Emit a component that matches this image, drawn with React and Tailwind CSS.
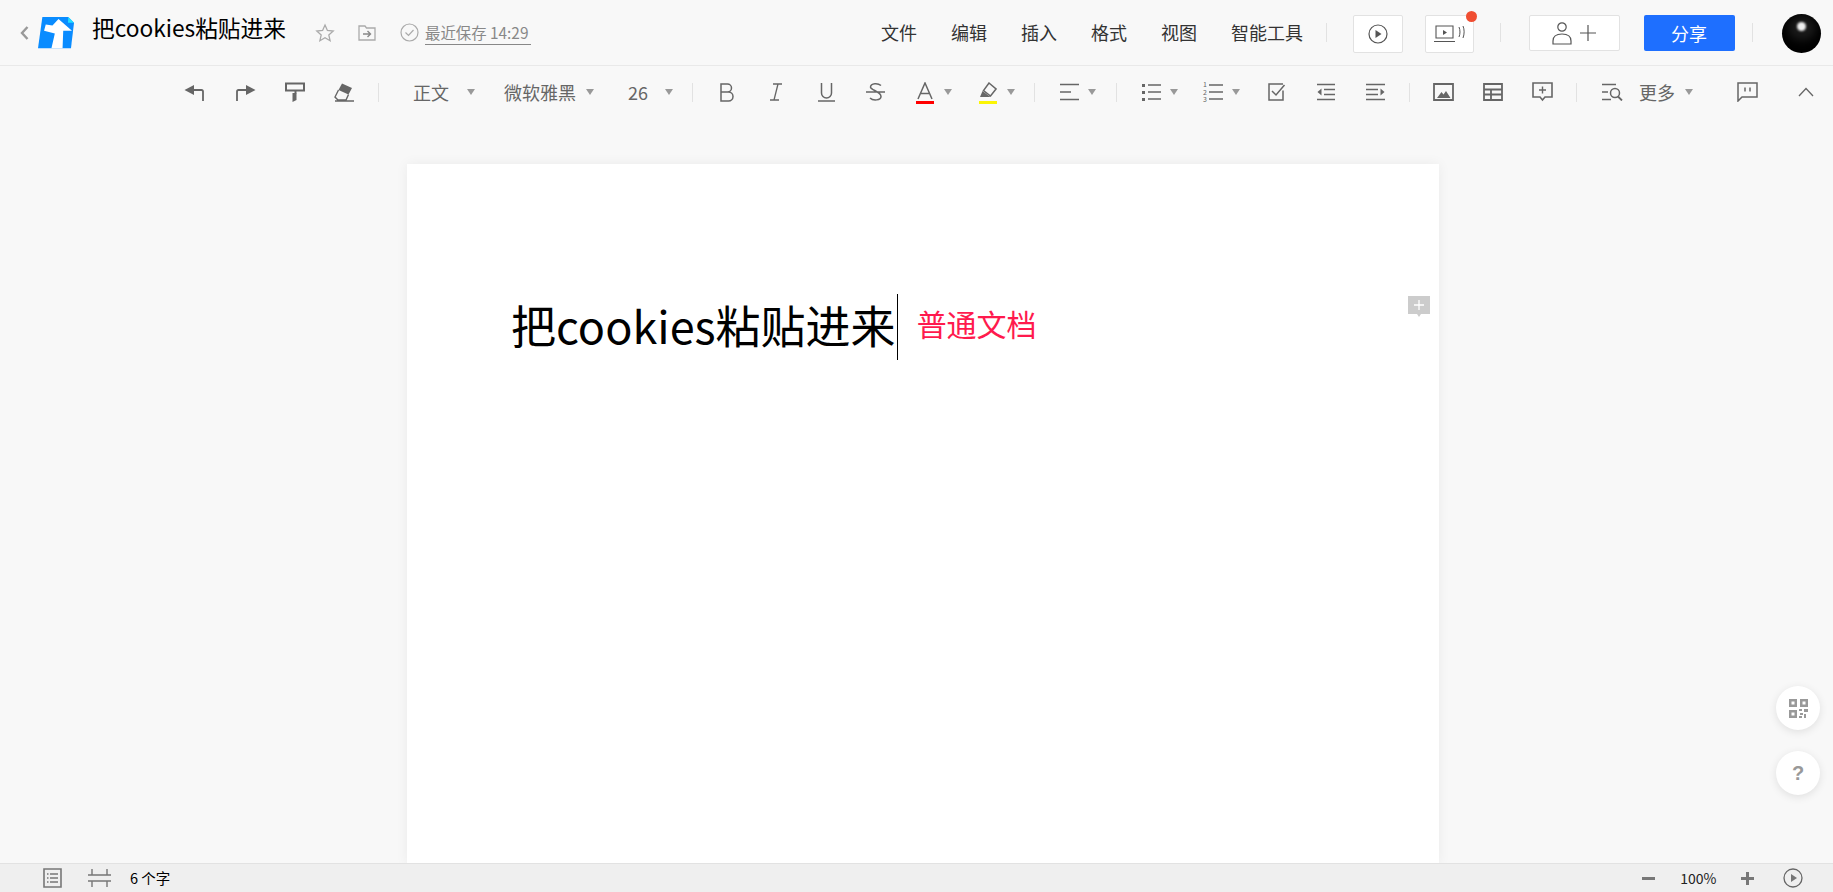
const S = ({ w = 20, h = 20, vb, children, className = "" }) => (
  <svg width={w} height={h} viewBox={vb || `0 0 ${w} ${h}`} fill="none" stroke="#666" strokeWidth="1.5" className={"block shrink-0 " + className}>{children}</svg>
);
const Caret = ({ ml }) => (
  <span className="block w-0 h-0 border-x-[4px] border-x-transparent border-t-[6px] border-t-[#999] shrink-0" style={{ marginLeft: ml }} />
);
const Sep = ({ ml }) => <span className="block w-px h-[19px] bg-[#e2e2e2] shrink-0" style={{ marginLeft: ml }} />;
const Item = ({ ml, children }) => <span className="block shrink-0" style={{ marginLeft: ml }}>{children}</span>;

const Logo = () => (
  <svg width="36" height="32" viewBox="115 35 107 95" className="block">
    <path d="M128 35H205L222 52L213 128H115Z" fill="#0a8cff" />
    <path d="M205 35L222 52H204Z" fill="#21e0ff" />
    <path d="M176 41L216 76H190L188 128H155L165 84L133 76L138 57L158 60Z" fill="#fff" />
  </svg>
);

const Menu = ({ label, ml }) => (
  <span className="block text-[18px] leading-none text-[#333] whitespace-nowrap mb-[2px]" style={{ marginLeft: ml }}>{label}</span>
);
const TT = ({ children, ml }) => (
  <span className="block text-[18px] leading-none text-[#666] whitespace-nowrap" style={{ marginLeft: ml }}>{children}</span>
);

export default function App() {
  return (
    <div className="h-[892px] w-[1833px] overflow-hidden flex flex-col bg-[#f8f8f8] font-['Noto_Sans_CJK_SC','Noto_Sans',sans-serif]">
      {/* header */}
      <header className="h-[66px] shrink-0 border-b border-[#e9e9e9] flex items-center">
        <Item ml="19px">
          <S w={11} h={16}><path d="M8.5 2 3 8l5.5 6" stroke="#999" strokeWidth="2.4" /></S>
        </Item>
        <Item ml="8px"><Logo /></Item>
        <span className="block ml-[18px] w-[195px] text-[22.7px] leading-none text-black whitespace-nowrap mb-[8px]">把cookies粘贴进来</span>
        <Item ml="28px">
          <S w={20} h={20}><path d="M10 2l2.4 5.4 5.8.6-4.4 3.9 1.3 5.8L10 14.8 4.9 17.7l1.3-5.8L1.800 8l5.800-.6z" stroke="#aaa" strokeWidth="1.3" /></S>
        </Item>
        <Item ml="23px">
          <S w={18} h={18}><path d="M1 16V2h6l1.500 2H17v12z" stroke="#aaa" strokeWidth="1.3" /><path d="M5 10h7M9.500 7l3 3-3 3" stroke="#888" strokeWidth="1.4" /></S>
        </Item>
        <Item ml="24px">
          <S w={19} h={19}><circle cx="9.500" cy="9.500" r="8.500" stroke="#aaa" strokeWidth="1.200" /><path d="M5.500 9.500l3 3 5-5.500" stroke="#aaa" strokeWidth="1.200" /></S>
        </Item>
        <span className="block ml-[6px] w-[106px] h-[21px] border-b border-[#888] text-[15.4px] leading-[17px] text-[#888] whitespace-nowrap mt-[4px]">最近保存 14:29</span>

        <Menu label="文件" ml="350px" />
        <Menu label="编辑" ml="34px" />
        <Menu label="插入" ml="34px" />
        <Menu label="格式" ml="34px" />
        <Menu label="视图" ml="34px" />
        <Menu label="智能工具" ml="34px" />
        <Sep ml="22.500px" />
        <span className="block ml-[26px] w-[50px] h-[38px] mt-[3px] bg-white border border-[#e2e2e2] rounded-[2px] flex items-center justify-center">
          <S w={20} h={20}><circle cx="10" cy="10" r="9" stroke="#555" strokeWidth="1.200" /><path d="M7.500 6l6 4-6 4z" fill="#555" stroke="none" /></S>
        </span>
        <span className="block relative ml-[22px] w-[49px] h-[38px] mt-[3px] bg-white border border-[#e2e2e2] rounded-[2px] flex items-center justify-center">
          <S w={32} h={20}><path d="M3 2h17v12H3zM1 17.500h21" stroke="#555" strokeWidth="1.100" /><path d="M10 6l4 2.500-4 2.500z" fill="#555" stroke="none" /><path d="M26 3c1.300 3 1.300 7 0 10M30 2c1.500 3.500 1.500 8 0 12" stroke="#555" strokeWidth="1" /></S>
          <span className="absolute -top-[5px] -right-[4px] w-[11px] h-[11px] rounded-full bg-[#f04e32]" />
        </span>
        <Sep ml="26px" />
        <span className="block ml-[28px] w-[91px] h-[36px] mt-[1px] bg-white border border-[#e2e2e2] rounded-[2px] flex items-center justify-center gap-[7px]">
          <S w={20} h={24}><circle cx="10" cy="6" r="4.200" stroke="#555" strokeWidth="1.200" /><path d="M1 23v-3c0-4 3-7 9-7s9 3 9 7v3z" stroke="#555" strokeWidth="1.200" /></S>
          <S w={18} h={18}><path d="M9 1v16M1 9h16" stroke="#555" strokeWidth="1.200" /></S>
        </span>
        <span className="block ml-[24px] w-[91px] h-[36px] mt-[1px] bg-[#1e6fff] rounded-[2px] text-white text-[18px] leading-[36px] text-center">分享</span>
        <Sep ml="17px" />
        <span className="block relative ml-[29px] mt-[2px] w-[39px] h-[39px] rounded-full bg-black overflow-hidden">
          <span className="absolute left-[15px] top-[8px] w-[9px] h-[9px] rounded-full bg-[#eee] blur-[1px]" />
          <span className="absolute left-[6px] top-[2px] w-[28px] h-[24px] rounded-full bg-white/10 blur-[5px]" />
        </span>
      </header>

      {/* toolbar */}
      <div className="h-[54px] shrink-0 flex items-center pb-[2px]">
        <Item ml="184px"><S w={20} h={20}><path d="M19 19V9.500q0-1.500-1.500-1.500H6" strokeWidth="1.800" /><path d="M10 3 0.500 8l9.500 5z" fill="#666" stroke="none" /></S></Item>
        <Item ml="32px"><S w={20} h={20}><path d="M1 19V9.500q0-1.500 1.500-1.500H14" strokeWidth="1.800" /><path d="M10 3l9.500 5-9.500 5z" fill="#666" stroke="none" /></S></Item>
        <Item ml="29px"><S w={20} h={20}><path d="M1 1.500h18v7H1z" strokeWidth="2" /><path d="M9.500 8.500h2v3h-2z" fill="#666" stroke="none" /><path d="M7.500 11h4v7l-4 2z" fill="#666" stroke="none" /></S></Item>
        <Item ml="29px"><S w={20} h={20}><path d="M8 1.500l10 4.500-3.500 6.500-10-4.500z" fill="#666" stroke="none" /><path d="M4.500 8l-3.500 7 3 3h8l2.500-5.500M1 19h19" strokeWidth="1.400" /></S></Item>
        <Sep ml="24px" />
        <TT ml="34px">正文</TT>
        <Caret ml="18px" />
        <TT ml="29px">微软雅黑</TT>
        <Caret ml="10px" />
        <TT ml="34px">26</TT>
        <Caret ml="17px" />
        <Sep ml="19px" />
        <Item ml="26px"><S w={15} h={20}><path d="M2 2h6.500a4 4 0 0 1 0 8H2zM2 10h7.500a4.500 4.500 0 0 1 0 9H2z" /></S></Item>
        <Item ml="36px"><S w={12} h={20}><path d="M3 2h9M0 18h9M8 2 4 18" strokeWidth="1.300" /></S></Item>
        <Item ml="36px"><S w={17} h={20}><path d="M3.500 1v10a5 5 0 0 0 10 0V1M0 19h17" /></S></Item>
        <Item ml="31px"><S w={19} h={20}><path d="M15 3.500C12 1 5 1 4.500 5c-.3 3 10.500 4.500 10.500 9.500 0 4-8 4.500-11 1.500M0 10h19" /></S></Item>
        <Item ml="31px"><span className="block mt-[2px]"><S w={18} h={22}><path d="M2 17 9 1l7 16M4.500 11.500h9" /><path d="M0 19h18v3H0z" fill="#f00" stroke="none" /></S></span></Item>
        <Caret ml="10px" />
        <Item ml="26px"><span className="block mt-[2px]"><S w={19} h={22}><path d="M11 1l7 6-5.500 7-7-5.500z" /><path d="M4.500 9l8 6H2z" fill="#666" stroke="none" /><path d="M1 19h18v3H1z" fill="#fbf505" stroke="none" /></S></span></Item>
        <Caret ml="10px" />
        <Sep ml="19px" />
        <Item ml="25px"><S w={19} h={18}><path d="M0 1.500h19M0 9h11M0 16.500h19" /></S></Item>
        <Caret ml="9px" />
        <Sep ml="20px" />
        <Item ml="25px"><S w={19} h={18}><path d="M6 2h13M6 9h13M6 16h13" /><path d="M0 1h3v3H0zM0 8h3v3H0zM0 15h3v3H0z" fill="#666" stroke="none" /></S></Item>
        <Caret ml="9px" />
        <Item ml="25px">
          <span className="relative block w-[20px] h-[18px]">
            <S w={20} h={18}><path d="M6 2h14M6 9h14M6 16h14" /></S>
            <span className="absolute left-0 top-[-2px] text-[7px] leading-[7.500px] text-[#666] w-[5px]">1 2 3</span>
          </span>
        </Item>
        <Caret ml="9px" />
        <Item ml="28px"><S w={18} h={18}><path d="M15 7.500V17H1V1h14" /><path d="M4 8l4 4 8.500-10" /></S></Item>
        <Item ml="31px"><S w={18} h={18}><path d="M0 1.500h18M7 6.500h11M7 11.500h11M0 16.500h18" /><path d="M4.500 5.500v7L0.500 9z" fill="#666" stroke="none" /></S></Item>
        <Item ml="31px"><S w={19} h={18}><path d="M0 1.500h19M0 6.500h12M0 11.500h12M0 16.500h19" /><path d="M14.500 5.500v7l4-3.500z" fill="#666" stroke="none" /></S></Item>
        <Sep ml="24px" />
        <Item ml="23px"><S w={21} h={18}><path d="M1 1h19v16H1z" strokeWidth="1.800" /><path d="M4 15l4.500-6 2 2.500L13 8l4.500 7z" fill="#666" stroke="none" /></S></Item>
        <Item ml="29px"><S w={20} h={18}><path d="M1 1h18v16H1zM1 6.500h18M1 11.500h18M8 6.500V17" strokeWidth="1.800" /></S></Item>
        <Item ml="29px"><S w={21} h={20}><path d="M1 1h19v14h-7l-2.500 3L8 15H1z" strokeWidth="1.600" /><path d="M10.500 4.500v7M7 8h7" strokeWidth="1.400" /></S></Item>
        <Sep ml="23px" />
        <Item ml="25px"><S w={21} h={18}><path d="M0 1.500h14M0 9h6M0 16.500h9" /><circle cx="13" cy="10" r="4.500" /><path d="M16 13.500l4 4" strokeWidth="1.800" /></S></Item>
        <TT ml="16px">更多</TT>
        <Caret ml="10px" />
        <Item ml="44px"><S w={21} h={20}><path d="M1 19V1h19v14H5z" strokeWidth="1.500" /><path d="M8 5.500v4M13 5.500v4" strokeWidth="1.500" /></S></Item>
        <Item ml="40px"><S w={16} h={10}><path d="M1 9l7-7.500L15 9" strokeWidth="1.300" /></S></Item>
      </div>

      {/* canvas */}
      <main className="relative flex-1 min-h-0 overflow-hidden">
        <div className="relative ml-[407px] mt-[44px] w-[1032px] h-[700px] bg-white shadow-[0_0_12px_rgba(0,0,0,0.06)] pl-[104px] pt-[130px]">
          <div className="flex items-start">
            <span className="block text-[45px] leading-[66px] -mt-[2px] text-black whitespace-nowrap">把cookies粘贴进来</span>
            <span className="block ml-[1px] w-px h-[66px] bg-black" />
            <span className="block ml-[19px] mt-[7px] text-[30px] leading-[44px] text-[#ff1a4d] whitespace-nowrap">普通文档</span>
          </div>
          <svg width="22" height="21" viewBox="0 0 22 21" className="absolute left-[1001px] top-[132px]">
            <path d="M0 0h22v18h-9l-2 3-2-3H0z" fill="#ccc" />
            <path d="M11 4v10M6 9h10" stroke="#fff" strokeWidth="1.300" />
          </svg>
        </div>
        <button className="absolute left-[1776px] top-[566px] w-[44px] h-[44px] rounded-full bg-white shadow-[0_2px_8px_rgba(0,0,0,0.1)] flex items-center justify-center">
          <svg width="19" height="19" viewBox="0 0 19 19" className="block">
            <path d="M0 0h8v8H0zM11 0h8v8h-8zM0 11h8v8H0z" fill="#999" />
            <path d="M2.500 2.500h3v3h-3zM13.500 2.500h3v3h-3zM2.500 13.500h3v3h-3z" fill="#fff" />
            <path d="M10 10h3v2h-3zM15 10h4v3h-4zM11 14h3v2h-3zM10 17h3v2h-3zM15 15h2v4h-2z" fill="#999" />
          </svg>
        </button>
        <button className="absolute left-[1776px] top-[631px] w-[44px] h-[44px] rounded-full bg-white shadow-[0_2px_8px_rgba(0,0,0,0.1)] text-[#999] text-[20px] leading-none font-bold font-['Liberation_Sans',sans-serif]">?</button>
      </main>

      {/* status */}
      <footer className="relative h-[29px] shrink-0 bg-[#efefef] border-t border-[#e2e2e2] flex items-center">
        <Item ml="43px"><S w={19} h={20}><path d="M1 1h17v18H1z" stroke="#777" strokeWidth="1.600" /><path d="M7 6h8M7 10h8M7 14h8M4 6h1.500M4 10h1.500M4 14h1.500" stroke="#777" strokeWidth="1.400" /></S></Item>
        <Item ml="26px"><S w={23} h={20}><path d="M0 7h23M0 13h23M4 1v6M19 1v6M4 13v6M19 13v6" stroke="#777" strokeWidth="1.400" /></S></Item>
        <span className="block ml-[19px] text-[14.500px] leading-none text-black whitespace-nowrap">6 个字</span>
        <span className="block ml-[1472px] w-[13px] h-[3px] bg-[#777]" />
        <span className="block ml-[25px] text-[14px] leading-none text-[#222] whitespace-nowrap">100%</span>
        <Item ml="24px"><S w={13} h={13}><path d="M6.500 0v13M0 6.500h13" stroke="#777" strokeWidth="3" /></S></Item>
        <Item ml="29px"><S w={20} h={20}><circle cx="10" cy="10" r="9" stroke="#666" strokeWidth="1.300" /><path d="M8 6l6 4-6 4z" fill="#777" stroke="none" /></S></Item>
      </footer>
    </div>
  );
}
